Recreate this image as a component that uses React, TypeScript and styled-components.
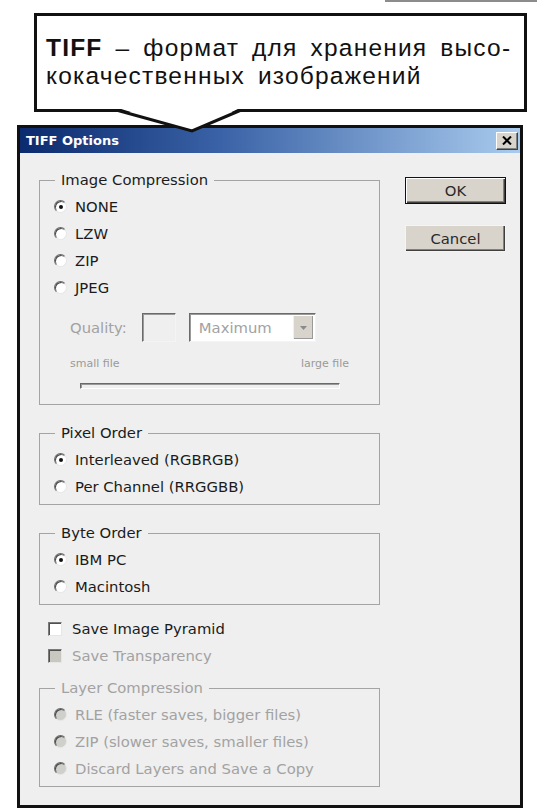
import * as React from 'react'
import styled, { createGlobalStyle } from 'styled-components'

const GlobalStyle = createGlobalStyle`
  html, body {
    margin: 0;
    padding: 0;
    background: #fff;
  }
`

const Page = styled.div`
  width: 537px;
  height: 812px;
  overflow: hidden;
  background: #fff;
`

const TopRule = styled.div`
  height: 2px;
  margin-left: 385px;
  background: #8c8c8c;
`

const Callout = styled.div`
  position: relative;
  z-index: 2;
  box-sizing: border-box;
  width: 493px;
  height: 99px;
  margin: 11px 0 0 34px;
  padding: 18px 0 0 9px;
  border: 3px solid #111;
  background: #fff;
  font-family: 'Liberation Sans', Arial, sans-serif;
  font-size: 24.5px;
  line-height: 28px;
  letter-spacing: 1.2px;
  word-spacing: 5px;
  color: #111;
  white-space: nowrap;

  & > b {
    font-weight: 700;
  }
`

const Pointer = styled.svg`
  position: absolute;
  left: -3px;
  top: -3px;
  overflow: visible;
  pointer-events: none;
`

const Dialog = styled.div`
  box-sizing: border-box;
  width: 506px;
  height: 683px;
  margin: 13px 0 0 17px;
  border: 3px solid #111;
  background: #efefef;
  font-family: 'DejaVu Sans', Verdana, sans-serif;
  font-size: 14.8px;
  color: #1b1b1b;
  display: flex;
  flex-direction: column;
`

const TitleBar = styled.div`
  height: 25px;
  display: flex;
  align-items: center;
  padding: 0 2px 0 6px;
  background: linear-gradient(90deg, #0c2a6e 0%, #3a62a6 40%, #a9cbee 100%);
  color: #fff;
  font-size: 13px;
  font-weight: 700;
`

const TitleText = styled.span`
  flex: 1;
`

const CloseButton = styled.div`
  box-sizing: border-box;
  width: 22px;
  height: 18px;
  display: flex;
  align-items: center;
  justify-content: center;
  background: #d8d4cc;
  border: 1px solid;
  border-color: #fff #404040 #404040 #fff;
  box-shadow: inset -1px -1px 0 #808080;
`

const Body = styled.div`
  flex: 1;
  display: grid;
  grid-template-columns: 341px 101px;
  column-gap: 25px;
  align-items: start;
  padding: 19px 14px 0 19px;
`

const LeftColumn = styled.div`
  display: flex;
  flex-direction: column;
`

const ButtonColumn = styled.div`
  display: flex;
  flex-direction: column;
  gap: 21px;
  margin-top: 5px;
`

const Button = styled.div<{ $default?: boolean }>`
  box-sizing: border-box;
  height: 27px;
  display: flex;
  align-items: center;
  justify-content: center;
  background: #d8d4cc;
  color: #2a2a2a;
  border: 1px solid ${p => (p.$default ? '#111' : '#f4f4f4')};
  box-shadow: ${p =>
    p.$default
      ? 'inset 1px 1px 0 #fff, inset -1px -1px 0 #404040, inset -2px -2px 0 #808080'
      : 'inset -1px -1px 0 #404040, inset -2px -2px 0 #808080'};
`

const Group = styled.fieldset<{ $gap?: number }>`
  margin: ${p => p.$gap ?? 0}px 0 0 0;
  padding: 5px 0 4px 14px;
  border: 1px solid #a4a4a4;
  min-inline-size: 0;
`

const Legend = styled.legend<{ $disabled?: boolean }>`
  margin-left: 1px;
  padding: 0 6px;
  line-height: 16px;
  color: ${p => (p.$disabled ? '#a2a2a2' : '#1b1b1b')};
`

const Row = styled.div<{ $disabled?: boolean; $indent?: number; $gap?: number }>`
  height: 27px;
  display: flex;
  align-items: center;
  gap: ${p => p.$gap ?? 8}px;
  margin-left: ${p => p.$indent ?? 0}px;
  color: ${p => (p.$disabled ? '#a2a2a2' : '#1b1b1b')};
`

const RadioDot = styled.span<{ $checked?: boolean; $disabled?: boolean }>`
  position: relative;
  box-sizing: border-box;
  width: 13px;
  height: 13px;
  flex: none;
  border-radius: 50%;
  border: 1px solid;
  border-color: #6a6a6a #e6e6e6 #e6e6e6 #6a6a6a;
  box-shadow: inset 1px 1px 0 #4a4a4a;
  background: ${p => (p.$disabled ? '#cfcfcb' : '#fff')};

  &::after {
    content: '';
    display: ${p => (p.$checked ? 'block' : 'none')};
    position: absolute;
    left: 3.5px;
    top: 3.5px;
    width: 4px;
    height: 4px;
    border-radius: 50%;
    background: #111;
  }
`

const CheckBox = styled.span<{ $disabled?: boolean }>`
  box-sizing: border-box;
  width: 14px;
  height: 14px;
  flex: none;
  border: 1px solid;
  border-color: #7a7a7a #e6e6e6 #e6e6e6 #7a7a7a;
  box-shadow: inset 1px 1px 0 #505050;
  background: ${p => (p.$disabled ? '#c9c8c0' : '#fff')};
`

const QualityRow = styled.div`
  height: 29px;
  margin-top: 12px;
  padding-left: 16px;
  display: flex;
  align-items: center;
  color: #a2a2a2;
`

const Sunken = styled.div`
  box-sizing: border-box;
  height: 29px;
  border: 1px solid;
  border-color: #6a6a6a #f4f4f4 #f4f4f4 #6a6a6a;
  box-shadow: inset 1px 1px 0 #9a9a9a;
`

const QualityInput = styled(Sunken)`
  width: 34px;
  margin-left: 15px;
  background: #efefef;
`

const Select = styled(Sunken)`
  width: 127px;
  margin-left: 13px;
  display: flex;
  align-items: center;
  padding: 2px 2px 2px 9px;
  background: #fff;
  color: #a2a2a2;
`

const SelectText = styled.span`
  flex: 1;
`

const SelectArrow = styled.div`
  width: 19px;
  align-self: stretch;
  display: flex;
  align-items: center;
  justify-content: center;
  background: #d8d4cc;
  border-left: 1px solid #f0f0f0;
  box-shadow: inset -1px -1px 0 #9a9a9a;
`

const FileLabels = styled.div`
  height: 14px;
  margin-top: 14px;
  padding: 0 30px 0 16px;
  display: flex;
  justify-content: space-between;
  align-items: center;
  font-size: 11px;
  color: #9a9a9a;
`

const SliderTrack = styled.div`
  box-sizing: border-box;
  width: 260px;
  height: 6px;
  margin: 13px 0 11px 26px;
  border: 1px solid;
  border-color: #6a6a6a #fff #fff #6a6a6a;
  box-shadow: inset 1px 1px 0 #9a9a9a;
  background: #efefef;
`

const CheckList = styled.div`
  margin-top: 10px;
`

type RadioProps = { label: string; checked?: boolean; disabled?: boolean }

const Radio = ({ label, checked, disabled }: RadioProps) => (
  <Row $disabled={disabled}>
    <RadioDot $checked={checked} $disabled={disabled} />
    <span>{label}</span>
  </Row>
)

type CheckProps = { label: string; disabled?: boolean }

const Check = ({ label, disabled }: CheckProps) => (
  <Row $disabled={disabled} $indent={9} $gap={10}>
    <CheckBox $disabled={disabled} />
    <span>{label}</span>
  </Row>
)

const App = () => (
  <Page>
    <GlobalStyle />
    <TopRule />
    <Callout>
      <b>TIFF</b> – формат для хранения высо-
      <br />
      кокачественных изображений
      <Pointer width='493' height='125' viewBox='0 0 493 125'>
        <polygon points='84,95 206,95 158,118' fill='#fff' />
        <polyline points='84,97.5 158,118 206,97.5' fill='none' stroke='#111' strokeWidth='3' />
      </Pointer>
    </Callout>
    <Dialog>
      <TitleBar>
        <TitleText>TIFF Options</TitleText>
        <CloseButton>
          <svg width='10' height='9' viewBox='0 0 10 9'>
            <path d='M1 0.5 L9 8.5 M9 0.5 L1 8.5' stroke='#000' strokeWidth='2' />
          </svg>
        </CloseButton>
      </TitleBar>
      <Body>
        <LeftColumn>
          <Group>
            <Legend>Image Compression</Legend>
            <Radio label='NONE' checked />
            <Radio label='LZW' />
            <Radio label='ZIP' />
            <Radio label='JPEG' />
            <QualityRow>
              Quality:
              <QualityInput />
              <Select>
                <SelectText>Maximum</SelectText>
                <SelectArrow>
                  <svg width='7' height='4' viewBox='0 0 7 4'>
                    <path d='M0 0 H7 L3.5 4 Z' fill='#8a8a8a' />
                  </svg>
                </SelectArrow>
              </Select>
            </QualityRow>
            <FileLabels>
              <span>small file</span>
              <span>large file</span>
            </FileLabels>
            <SliderTrack />
          </Group>
          <Group $gap={20}>
            <Legend>Pixel Order</Legend>
            <Radio label='Interleaved (RGBRGB)' checked />
            <Radio label='Per Channel (RRGGBB)' />
          </Group>
          <Group $gap={20}>
            <Legend>Byte Order</Legend>
            <Radio label='IBM PC' checked />
            <Radio label='Macintosh' />
          </Group>
          <CheckList>
            <Check label='Save Image Pyramid' />
            <Check label='Save Transparency' disabled />
          </CheckList>
          <Group $gap={11}>
            <Legend $disabled>Layer Compression</Legend>
            <Radio label='RLE (faster saves, bigger files)' disabled />
            <Radio label='ZIP (slower saves, smaller files)' disabled />
            <Radio label='Discard Layers and Save a Copy' disabled />
          </Group>
        </LeftColumn>
        <ButtonColumn>
          <Button $default>OK</Button>
          <Button>Cancel</Button>
        </ButtonColumn>
      </Body>
    </Dialog>
  </Page>
)

export default App
